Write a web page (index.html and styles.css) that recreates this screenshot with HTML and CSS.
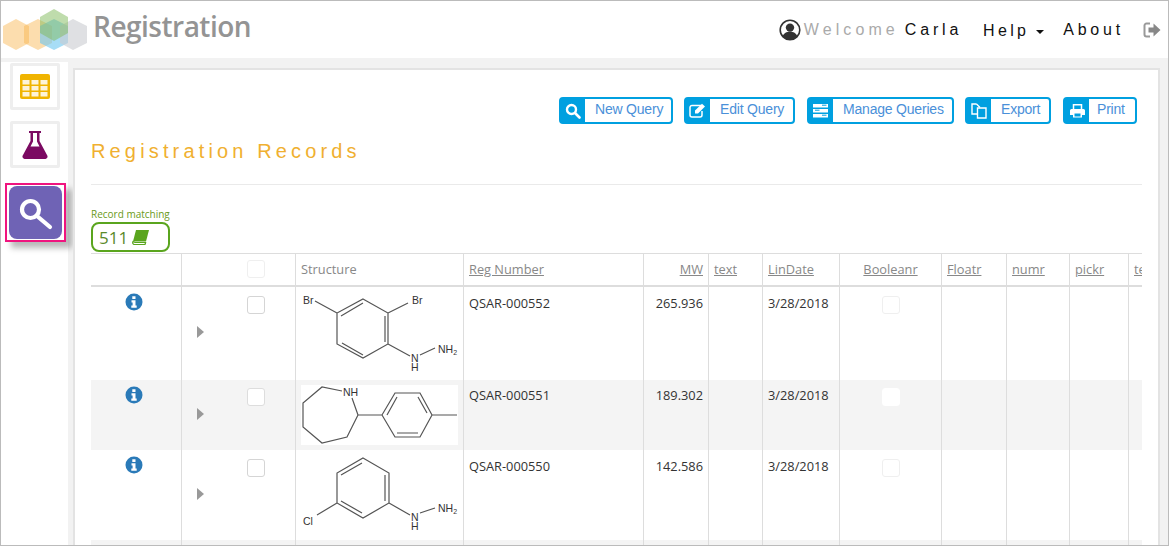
FILE: index.html
```html
<!doctype html>
<html>
<head>
<title>Registration Records</title>
<link rel="stylesheet" href="styles.css">
</head>
<body>
<div class="frame">
	<header class="topbar">
		<div class="brand">
			<svg class="logo" width="88" height="46" viewBox="0 0 88 46">
				<polygon class="hex-orange" points="16,13 29,20 29,37 16,44 3,37 3,20"/>
				<polygon class="hex-orange" points="38,13 52,20 52,37 38,44 24,37 24,20"/>
				<polygon class="hex-blue" points="54,13 68,20 68,37 54,44 40,37 40,20"/>
				<polygon class="hex-grey" points="73,13 87,20 87,37 73,44 60,37 60,20"/>
				<polygon class="hex-green" points="54,3 68,11 68,27 54,35 40,27 40,11"/>
			</svg>
			<span class="brand-name">Registration</span>
		</div>
		<nav class="usernav">
			<svg class="avatar" width="22" height="22" viewBox="0 0 22 22">
				<circle cx="11" cy="11" r="9.8" fill="#fff" stroke="#333" stroke-width="1.6"/>
				<circle cx="11" cy="8.6" r="4.2" fill="#333"/>
				<path d="M3.6 17.5c1.2-3.6 4-4.8 7.4-4.8s6.2 1.2 7.4 4.8a10 10 0 0 1-14.8 0z" fill="#333"/>
			</svg>
			<span class="welcome">Welcome</span>
			<span class="navlink user">Carla</span>
			<span class="navlink help">Help<i class="caret"></i></span>
			<span class="navlink about">About</span>
			<svg class="logout" width="18" height="16" viewBox="0 0 18 16">
				<path d="M7 1.5H3.5A2 2 0 0 0 1.5 3.500v9a2 2 0 0 0 2 2H7" fill="none" stroke="#999" stroke-width="2"/>
				<path d="M5.500 5.500h5V1.500L17.500 8l-7 6.500v-4h-5z" fill="#888"/>
			</svg>
		</nav>
	</header>

	<div class="workspace">
		<aside class="sidebar">
			<div class="tile">
				<svg width="30" height="25" viewBox="0 0 30 25">
					<rect width="30" height="25" rx="2" fill="#f0b400"/>
					<g fill="#fdf3d8">
						<rect x="2.500" y="6" width="7" height="4.500"/><rect x="11.500" y="6" width="7" height="4.500"/><rect x="20.500" y="6" width="7" height="4.500"/>
						<rect x="2.500" y="12" width="7" height="4.500"/><rect x="11.500" y="12" width="7" height="4.500"/><rect x="20.500" y="12" width="7" height="4.500"/>
						<rect x="2.500" y="18" width="7" height="4.500"/><rect x="11.500" y="18" width="7" height="4.500"/><rect x="20.500" y="18" width="7" height="4.500"/>
					</g>
				</svg>
			</div>
			<div class="tile">
				<svg width="26" height="28" viewBox="0 0 26 28">
					<path d="M7 0h12v2h-1.500v8L25 24a2.500 2.500 0 0 1-2.300 4H3.300A2.500 2.500 0 0 1 1 24l7.500-14V2H7z" fill="#7b0a62"/>
					<path d="M11 2h4v8.500l2.500 5H8.500L11 10.500z" fill="#fff"/>
				</svg>
			</div>
			<div class="tile-marked">
				<div class="tile-active">
					<svg width="38" height="38" viewBox="0 0 38 38">
						<circle cx="13.500" cy="15.500" r="8.500" fill="none" stroke="#fff" stroke-width="4.200"/>
						<path d="M20 22l13 11" stroke="#fff" stroke-width="4.200" stroke-linecap="round"/>
					</svg>
				</div>
			</div>
		</aside>

		<main class="panel">
			<div class="toolbar">
				<a class="btn btn-new"><span class="btn-icon">
					<svg width="16" height="16" viewBox="0 0 16 16"><circle cx="6.500" cy="6.500" r="4.500" fill="none" stroke="#fff" stroke-width="2.400"/><path d="M10 10l4.500 4.500" stroke="#fff" stroke-width="2.600" stroke-linecap="round"/></svg>
				</span><span class="btn-label">New Query</span></a>
				<a class="btn btn-edit"><span class="btn-icon">
					<svg width="18" height="15" viewBox="0 0 18 15"><path d="M12 2.500H3a2 2 0 0 0-2 2V12a2 2 0 0 0 2 2h8a2 2 0 0 0 2-2V8" fill="none" stroke="#fff" stroke-width="1.500"/><path d="M6 7.500L13 .8l3 2.800-7 6.900H6z" fill="#fff"/></svg>
				</span><span class="btn-label">Edit Query</span></a>
				<a class="btn btn-manage"><span class="btn-icon">
					<svg width="16" height="14" viewBox="0 0 16 14"><path d="M0 0h15v3.500H0zM0 5h15v3.500H0zM0 10h15v3.500H0z" fill="#fff"/><path d="M9 1.200h4.500M2 6.200h4.500M9 11.200h4.500" stroke="#00a0e0" stroke-width="1"/></svg>
				</span><span class="btn-label">Manage Queries</span></a>
				<a class="btn btn-export"><span class="btn-icon">
					<svg width="16" height="16" viewBox="0 0 16 16"><path d="M5.500 1H1v10h5M5.500 1L9 4.500" fill="none" stroke="#fff" stroke-width="1.400"/><path d="M6.500 5h8.500v10H6.500z" fill="none" stroke="#fff" stroke-width="1.400"/></svg>
				</span><span class="btn-label">Export</span></a>
				<a class="btn btn-print"><span class="btn-icon">
					<svg width="15" height="14" viewBox="0 0 15 14"><path d="M3.500 5V.8h8V5" fill="none" stroke="#fff" stroke-width="1.500"/><path d="M1.500 5h12A1.500 1.500 0 0 1 15 6.500V11h-3v2.500H3V11H0V6.500A1.500 1.500 0 0 1 1.500 5z" fill="#fff"/><path d="M4.500 9.500h6v3h-6z" fill="#00a0e0"/></svg>
				</span><span class="btn-label">Print</span></a>
			</div>

			<h1 class="page-title">Registration Records</h1>
			<hr class="rule">

			<div class="matching">
				<div class="matching-label">Record matching</div>
				<div class="matching-count">511
					<svg width="17" height="15" viewBox="0 0 17 15"><path d="M4 0h13l-3 11.500H1z" fill="#5aa51e"/><path d="M1 11.500C.2 13 1 14.500 2.500 14.500H13l.6-2H3z" fill="none" stroke="#5aa51e" stroke-width="1.200"/></svg>
				</div>
			</div>

			<div class="grid-wrap">
				<table class="grid">
					<colgroup>
						<col class="c-info"><col class="c-arrow"><col class="c-check"><col class="c-struct"><col class="c-reg"><col class="c-mw"><col class="c-text"><col class="c-date"><col class="c-bool"><col class="c-float"><col class="c-num"><col class="c-pick"><col class="c-last">
					</colgroup>
					<thead>
						<tr>
							<th></th>
							<th class="joined"></th>
							<th class="joined-r"><span class="box faint"></span></th>
							<th class="plain">Structure</th>
							<th><a>Reg Number</a></th>
							<th class="right"><a>MW</a></th>
							<th><a>text</a></th>
							<th><a>LinDate</a></th>
							<th class="center"><a>Booleanr</a></th>
							<th><a>Floatr</a></th>
							<th><a>numr</a></th>
							<th><a>pickr</a></th>
							<th><a>text</a></th>
						</tr>
					</thead>
					<tbody>
						<tr class="row-a">
							<td class="center info-cell"><svg class="info" width="18" height="18" viewBox="0 0 18 18"><circle cx="9" cy="9" r="8.500" fill="#2a7ab8"/><path d="M7.300 3.200h3.200v2.700H7.300zM6.500 7.300h4v5.200h1.200v2.200H6.300v-2.200h1.300V9.400H6.500z" fill="#fff"/></svg></td>
							<td class="joined mid"><i class="arrow"></i></td>
							<td class="joined-r"><span class="box"></span></td>
							<td class="struct">
								<svg class="mol" width="160" height="93" viewBox="0 0 160 93">
									<path class="bond" d="M63 12L88 26V57L63 71L37 57V26zM41 29L63 16M85 29V55M42 56L63 68M37 26L15 14M88 26L108 16M88 57L110 69M120 68L135 61"/>
									<text class="atom" x="3" y="17">Br</text>
									<text class="atom" x="112" y="17">Br</text>
									<text class="atom" x="111" y="75">N</text>
									<text class="atom" x="111" y="84">H</text>
									<text class="atom" x="138" y="66">NH<tspan class="sub" dy="2">2</tspan></text>
								</svg>
							</td>
							<td>QSAR-000552</td>
							<td class="right">265.936</td>
							<td></td>
							<td>3/28/2018</td>
							<td class="center"><span class="box faint"></span></td>
							<td></td><td></td><td></td><td></td>
						</tr>
						<tr class="row-b shaded">
							<td class="center info-cell"><svg class="info" width="18" height="18" viewBox="0 0 18 18"><circle cx="9" cy="9" r="8.500" fill="#2a7ab8"/><path d="M7.300 3.200h3.200v2.700H7.300zM6.500 7.300h4v5.200h1.200v2.200H6.300v-2.200h1.300V9.400H6.500z" fill="#fff"/></svg></td>
							<td class="joined mid"><i class="arrow"></i></td>
							<td class="joined-r"><span class="box white"></span></td>
							<td class="struct">
								<svg class="mol" width="158" height="70" viewBox="0 0 158 70">
									<rect x="1" y="5" width="157" height="60" fill="#fff"/>
									<path class="bond" d="M42 11L22 7L3 23V47L22 63L47 57L58 35L52 18M58 35H82L95 13H120L132 35L120 57H95L82 35M132 35H157M87 35L97 17M97 53H118M118 17L127 33"/>
									<text class="atom" x="43" y="16">NH</text>
								</svg>
							</td>
							<td>QSAR-000551</td>
							<td class="right">189.302</td>
							<td></td>
							<td>3/28/2018</td>
							<td class="center"><span class="box white"></span></td>
							<td></td><td></td><td></td><td></td>
						</tr>
						<tr class="row-c">
							<td class="center info-cell"><svg class="info" width="18" height="18" viewBox="0 0 18 18"><circle cx="9" cy="9" r="8.500" fill="#2a7ab8"/><path d="M7.300 3.200h3.200v2.700H7.300zM6.500 7.300h4v5.200h1.200v2.200H6.300v-2.200h1.300V9.400H6.500z" fill="#fff"/></svg></td>
							<td class="joined mid"><i class="arrow"></i></td>
							<td class="joined-r"><span class="box"></span></td>
							<td class="struct">
								<svg class="mol" width="160" height="90" viewBox="0 0 160 90">
									<path class="bond" d="M63 8L89 23V53L63 68L37 53V23zM41 25L62 13M85 25V51M41 51L62 63M37 53L17 65M89 53L110 65M120 63L135 58"/>
									<text class="atom" x="3" y="75">Cl</text>
									<text class="atom" x="111" y="71">N</text>
									<text class="atom" x="111" y="80">H</text>
									<text class="atom" x="138" y="62">NH<tspan class="sub" dy="2">2</tspan></text>
								</svg>
							</td>
							<td>QSAR-000550</td>
							<td class="right">142.586</td>
							<td></td>
							<td>3/28/2018</td>
							<td class="center"><span class="box faint"></span></td>
							<td></td><td></td><td></td><td></td>
						</tr>
						<tr class="row-d shaded">
							<td></td><td class="joined"></td><td class="joined-r"></td><td></td><td></td><td></td><td></td><td></td><td></td><td></td><td></td><td></td><td></td>
						</tr>
					</tbody>
				</table>
			</div>
		</main>
	</div>
</div>
</body>
</html>
```

FILE: styles.css
```css
html, body {
  margin: 0;
  height: 100%;
  overflow: hidden;
}
body {
  background: #fff;
  font-family: "Liberation Sans", Arial, sans-serif;
}
.frame {
  width: 1169px;
  height: 546px;
  box-sizing: border-box;
  border: 1px solid #bbb;
  display: flex;
  flex-direction: column;
  overflow: hidden;
}

/* top bar */
.topbar {
  height: 57px;
  flex: none;
  display: flex;
  justify-content: space-between;
  background: #fff;
}
.brand {
  display: flex;
  align-items: center;
}
.logo {
  margin: -1px 5px 0 -1px;
  display: block;
}
.hex-orange { fill: #f9b44c; opacity: .45; }
.hex-blue { fill: #6cc6f0; opacity: .6; }
.hex-grey { fill: #c9ccd0; opacity: .6; }
.hex-green { fill: #7fb95a; opacity: .5; }
.brand-name {
  font-family: "Open Sans", sans-serif;
  font-weight: 600;
  font-size: 28px;
  letter-spacing: -.5px;
  color: #949494;
  margin-top: -7px;
}
.usernav {
  display: flex;
  align-items: center;
  padding-right: 7px;
  font-size: 16px;
  letter-spacing: 3.8px;
  color: #111;
  margin-top: 1px;
}
.avatar { margin-right: 3px; }
.welcome { color: #aaa; margin-right: 6px; letter-spacing: 4.1px; }
.user { margin-right: 21px; }
.help { margin-right: 19px; margin-top: 2px; letter-spacing: 3.3px; }
.about { margin-right: 19px; }
.caret {
  display: inline-block;
  border: 4.5px solid transparent;
  border-top-color: #111;
  border-bottom: 0;
  margin-left: 7px;
  vertical-align: 2px;
}

/* sidebar and content */
.workspace {
  flex: 1;
  display: flex;
  min-height: 0;
  background: #f2f2f2;
  padding-top: 4px;
}
.sidebar {
  width: 67px;
  flex: none;
  background: #fff;
  display: flex;
  flex-direction: column;
  padding-top: 1px;
}
.tile {
  width: 50px;
  height: 47px;
  box-sizing: border-box;
  margin: 0 0 11px 9px;
  border: 3px solid #eee;
  border-radius: 2px;
  display: flex;
  align-items: center;
  justify-content: center;
}
.tile-marked {
  width: 61px;
  height: 59px;
  box-sizing: border-box;
  margin: 4px 0 0 4px;
  border: 2px solid #f0147f;
  padding: 1px 2px;
  box-shadow: 6px 6px 6px rgba(0, 0, 0, .28);
}
.tile-active {
  height: 53px;
  background: #6f63b5;
  border-radius: 8px;
  display: flex;
  align-items: center;
  justify-content: center;
}
.panel {
  flex: 1;
  min-width: 0;
  margin: 6px 8px 0 5px;
  border: 2px solid #e3e3e3;
  border-bottom: 0;
  background: #fff;
  padding: 27px 16px 0 16px;
  display: flex;
  flex-direction: column;
}

/* toolbar buttons */
.toolbar {
  display: flex;
  justify-content: flex-end;
  margin-right: 5px;
}
.btn {
  height: 27px;
  box-sizing: border-box;
  border: 2px solid #00a0e0;
  border-radius: 4px;
  display: flex;
  align-items: center;
  font-size: 14px;
  letter-spacing: -.2px;
  color: #4a90d9;
  margin-left: 11px;
}
.btn-icon {
  width: 24px;
  align-self: stretch;
  background: #00a0e0;
  display: flex;
  align-items: center;
  justify-content: center;
  margin-right: 10px;
}
.btn-label { margin-top: -3px; }
.btn-new { width: 114px; }
.btn-edit { width: 111px; }
.btn-manage { width: 147px; margin-left: 12px; }
.btn-export { width: 86px; }
.btn-print { width: 74px; margin-left: 12px; }
.btn-print .btn-icon { margin-right: 8px; }

.page-title {
  margin: 15px 0 0;
  font-size: 20px;
  line-height: 24px;
  font-weight: normal;
  letter-spacing: 4.15px;
  color: #f0b030;
}
.rule {
  border: 0;
  border-top: 1px solid #eaeaea;
  margin: 21px 0 0;
}
.matching {
  margin-top: 23px;
}
.matching-label {
  font-family: "Open Sans", sans-serif;
  font-size: 10px;
  line-height: 13px;
  color: #6a9a20;
}
.matching-count {
  width: 79px;
  height: 30px;
  box-sizing: border-box;
  margin-top: 1px;
  border: 2px solid #5aa51e;
  border-radius: 8px;
  padding-left: 6px;
  display: flex;
  align-items: center;
  gap: 4px;
  font-family: "Open Sans", sans-serif;
  font-size: 17px;
  color: #5a8a2a;
}

/* records table */
.grid-wrap {
  margin-top: 1px;
  flex: 1;
  min-height: 0;
  overflow: hidden;
}
.grid {
  table-layout: fixed;
  width: 1091px;
  border-collapse: separate;
  border-spacing: 0;
  font-family: "Open Sans", sans-serif;
  font-size: 12.800px;
  color: #333;
}
.c-info { width: 91px; }
.c-arrow { width: 60px; }
.c-check { width: 54px; }
.c-struct { width: 168px; }
.c-reg { width: 180px; }
.c-mw { width: 65px; }
.c-text { width: 54px; }
.c-date { width: 77px; }
.c-bool { width: 102px; }
.c-float { width: 65px; }
.c-num { width: 63px; }
.c-pick { width: 59px; }
.c-last { width: 53px; }

.grid th {
  height: 29px;
  padding: 0 5px 2px;
  border-top: 1px solid #ddd;
  border-bottom: 2px solid #ddd;
  border-right: 1px solid #ddd;
  text-align: left;
  font-weight: normal;
  color: #888;
  white-space: nowrap;
  overflow: hidden;
}
.grid th a { text-decoration: underline; }
.grid td {
  padding: 8px 5px 0;
  border-right: 1px solid #ddd;
  vertical-align: top;
  line-height: 17px;
  overflow: hidden;
}
.grid th.right, .grid td.right { text-align: right; padding-right: 5px; }
.grid th.center, .grid td.center { text-align: center; }
.grid td.info-cell { padding: 6px 10px 0 6px; }
.grid .joined { border-right: 0; }
.grid td.mid { vertical-align: middle; padding: 0 0 3px 15px; }
.grid td.struct { padding: 0 0 0 4px; line-height: 0; }
.row-a td { height: 93px; box-sizing: border-box; }
.row-b td { height: 70px; box-sizing: border-box; padding-top: 7px; }
.row-c td { height: 90px; box-sizing: border-box; }
.row-d td { height: 10px; box-sizing: border-box; padding: 0; }
.shaded td { background: #f4f4f4; }

.info { display: inline-block; }
.arrow {
  display: block;
  width: 0;
  border-left: 7px solid #999;
  border-top: 6px solid transparent;
  border-bottom: 6px solid transparent;
}
.box {
  display: inline-block;
  width: 18px;
  height: 18px;
  box-sizing: border-box;
  border: 1px solid #d5d5d5;
  border-radius: 3px;
  background: #fff;
  vertical-align: top;
  margin-top: 1px;
}
.box.faint { border-color: #efefef; }
.box.white { border-color: #ddd; }
.grid td.center .box.white { border-color: #fff; }
.mol { display: block; }
.bond {
  fill: none;
  stroke: #555;
  stroke-width: 1.200;
}
.atom {
  font-family: "Liberation Sans", sans-serif;
  font-size: 10.500px;
  fill: #333;
}
.sub { font-size: 7px; }
```
